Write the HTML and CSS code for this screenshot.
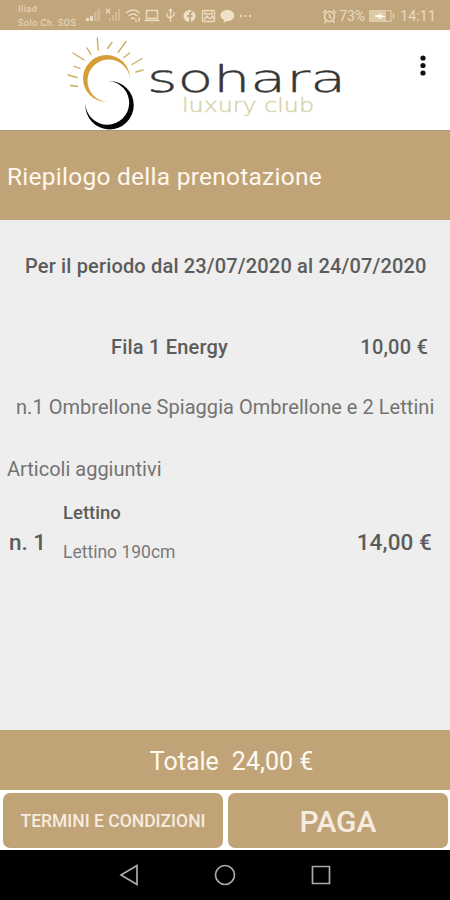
FILE: index.html
```html
<!DOCTYPE html>
<html lang="it">
<head>
<meta charset="utf-8">
<title>Sohara Luxury Club</title>
<link rel="stylesheet" href="styles.css">
</head>
<body>
<div class="status">
  <div class="carrier"><span>Iliad</span><span>Solo Ch. SOS</span></div>
  <svg class="status-icons" width="170" height="30" viewBox="84 0 170 30" fill="none" stroke="#eadbc1" stroke-width="1.3">
    <g stroke="none" fill="#eadbc1">
      <path d="M86 18h3v3h-3zM90 16h3v5h-3z"/>
      <path opacity=".4" d="M94 12h2.500v9H94zM97.500 9h2.500v12h-2.500zM109 18h2v3h-2zM112 15h2v6h-2zM115 12h2v9h-2zM118 9h2v12h-2z"/>
    </g>
    <path d="M106 9l4 4M110 9l-4 4"/>
    <path d="M126 13q7-6 14 0M128.500 16q4.500-4 9 0M131 19q2-2 4 0M136 19v3M139 17v5"/>
    <path d="M146.500 10.500h11v8h-11zM144.500 20.500h15"/>
    <path d="M170.500 10v12M167 13v3l3.500 3M174 12v3l-3.500 3M169 11l1.500-2 1.500 2"/>
    <circle cx="189.500" cy="16" r="6" fill="#f0e2c9" stroke="none"/>
    <path stroke="#c2a67b" stroke-width="1.800" d="M190 22v-8q0-2 2.500-2M187 16h5.500"/>
    <rect x="202.500" y="10.500" width="12" height="11" rx="1"/>
    <path d="M205 10v4h7v-4M204 20l3-4 3 3 2-3 3 4"/>
    <path fill="#f0e2c9" stroke="none" d="M227.500 10c9 0 9 11 0 11l-4 1.500.5-2.500c-6-3-4-10 3.500-10z"/>
    <path stroke-width="1.800" stroke-dasharray="2 2.500" d="M240 16h12"/>
  </svg>
  <div class="status-right">
    <svg width="15" height="16" viewBox="0 0 15 16" fill="none" stroke="#eadbc1" stroke-width="1.400"><circle cx="7.500" cy="8.500" r="5"/><path d="M7.500 5.500v3l2 2M1 5l3-3M14 5l-3-3M4 13l-1.500 2M11 13l1.500 2"/></svg>
    <span class="percent">73%</span>
    <svg width="28" height="14" viewBox="0 0 28 14"><path fill="#dccaab" d="M1 1h17v12H1z"/><path fill="none" stroke="#dccaab" stroke-width="1.300" d="M18 1.700h5v10.600h-5M25.500 4v6"/><path fill="#fff8e8" d="M7 6h4V4l4 3h2v1h-4v2L9 8H7z"/></svg>
    <span class="clock">14:11</span>
  </div>
</div>
<header class="brand">
  <svg width="450" height="100" viewBox="0 30 450 100" role="img">
    <g fill="none" stroke="#ccae62" stroke-width="1.400" stroke-linecap="round">
      <path d="M97.300 38l1 12M87 48l4 6.500M73 53l11 7M74 66.300l6 2M68 75l9 2.500M70.500 85.500l7 1M112 42.500l-4.500 6M126 41.500l-8 11M129.500 53l-5.500 4.500M142 58.500l-10 6M143 70l-7 2"/>
    </g>
    <path fill="#d69d36" d="M130 79A23.500 23.500 0 1 0 107 102A21.300 21.300 0 1 1 130 79z"/>
    <path fill="#050505" d="M109 81A24.200 24.200 0 1 1 85.400 104A21.900 21.900 0 1 0 109 81z"/>
    <text class="wordmark" x="147" y="92" textLength="199" lengthAdjust="spacingAndGlyphs">sohara</text>
    <text class="tagline" x="182" y="112" textLength="132" lengthAdjust="spacingAndGlyphs">luxury club</text>
    <g fill="#111"><circle cx="423" cy="58" r="2.600"/><circle cx="423" cy="65.500" r="2.600"/><circle cx="423" cy="73" r="2.600"/></g>
  </svg>
</header>
<h1 class="title"><span>Riepilogo della prenotazione</span></h1>
<main class="summary">
  <p class="period">Per il periodo dal 23/07/2020 al 24/07/2020</p>
  <div class="place"><span class="place-name">Fila 1 Energy</span><span class="place-price">10,00 €</span></div>
  <p class="detail">n.1 Ombrellone Spiaggia Ombrellone e 2 Lettini</p>
  <h2 class="extras">Articoli aggiuntivi</h2>
  <div class="item">
    <span class="qty">n. 1</span>
    <div class="item-text"><span class="item-name">Lettino</span><span class="item-desc">Lettino 190cm</span></div>
    <span class="item-price">14,00 €</span>
  </div>
</main>
<div class="total"><span>Totale</span><span>24,00 €</span></div>
<div class="actions">
  <button class="btn terms">TERMINI E CONDIZIONI</button>
  <button class="btn pay">PAGA</button>
</div>
<nav class="navbar">
  <svg width="22" height="22" viewBox="0 0 22 22"><path d="M3 11L19 1.500v19z"/></svg>
  <svg width="22" height="22" viewBox="0 0 22 22"><circle cx="11" cy="11" r="9.500"/></svg>
  <svg width="22" height="22" viewBox="0 0 22 22"><path d="M2.500 2.500h17v17h-17z"/></svg>
</nav>
</body>
</html>
```
FILE: styles.css
```css
* { box-sizing: border-box; }
body { margin: 0; width: 450px; height: 900px; overflow: hidden; display: flex; flex-direction: column; background: #fff; color: #5c5c5c; font-family: Roboto, sans-serif; }
p, h1, h2 { margin: 0; font-weight: 400; }
span, p, h1, h2, button { white-space: nowrap; }

.status { height: 30px; flex: none; background: #c2a67b; color: #eadbc1; display: flex; align-items: center; padding: 0 14px 0 18px; }
.carrier { width: 66px; display: flex; flex-direction: column; font-size: 9px; line-height: 14px; padding-top: 2px; letter-spacing: .5px; }
.status-icons { flex: none; }
.status-right { margin-left: auto; display: flex; align-items: center; padding-top: 2px; }
.percent { font-size: 14px; margin-left: 2px; }
.status-right svg + .percent + svg { margin: 0 4px 0 3px; }
.clock { font-size: 14px; letter-spacing: .2px; }

.brand { height: 100px; flex: none; }
.brand svg { display: block; }
.wordmark { font: 200 38px "DejaVu Sans", sans-serif; fill: #333; stroke: #444; stroke-width: .4; }
.tagline { font: 200 19px "DejaVu Sans", sans-serif; fill: #d3cf9f; stroke: #d9d6b0; stroke-width: .4; }

.title { height: 90px; flex: none; background: #c1a378; border-top: 1px solid #a8987f; color: #fff8ee; display: flex; align-items: center; padding: 2px 7px 0; font-size: 24.500px; letter-spacing: .25px; }

.summary { height: 510px; flex: none; background: #eee; }
.period { padding: 32px 0 0 25px; font-size: 20px; font-weight: 500; line-height: 28px; letter-spacing: .16px; }
.place { display: flex; justify-content: space-between; padding: 53px 22px 0 111px; font-size: 20px; font-weight: 500; line-height: 28px; letter-spacing: .2px; }
.detail { padding: 32px 0 0 16px; font-size: 20px; line-height: 28px; color: #737373; letter-spacing: .04px; }
.extras { padding: 34px 0 0 7px; font-size: 20px; line-height: 28px; color: #737373; }
.item { display: flex; align-items: center; padding: 17px 18px 0 9px; }
.qty { width: 54px; font-size: 22.500px; font-weight: 500; padding-top: 19px; }
.item-text { display: flex; flex-direction: column; gap: 15px; line-height: 24px; padding-top: 1px; }
.item-name { font-size: 18.500px; font-weight: 500; }
.item-desc { font-size: 17.500px; color: #7a7a7a; }
.item-price { margin-left: auto; font-size: 22.500px; font-weight: 500; padding-top: 19px; letter-spacing: .1px; }

.total { height: 60px; flex: none; background: #c1a378; color: #fffaf0; display: flex; justify-content: center; align-items: center; gap: 13px; font-size: 25px; padding: 2px 0 0 13px; }
.actions { height: 60px; flex: none; display: grid; grid-template-columns: 220px 220px; gap: 5px; padding: 3px 2px 2px 3px; }
.btn { border: 0; border-radius: 7px; background: #c1a378; color: #f5ecdf; font-family: inherit; font-weight: 500; padding: 0; }
.terms { font-size: 17.500px; }
.pay { font-size: 30px; padding: 1px 0 0; }
.navbar { height: 50px; flex: none; background: #000; display: flex; justify-content: center; gap: 74px; align-items: center; padding-right: 1px; }
.navbar svg { fill: none; stroke: #aaa; stroke-width: 1.700; }
```
